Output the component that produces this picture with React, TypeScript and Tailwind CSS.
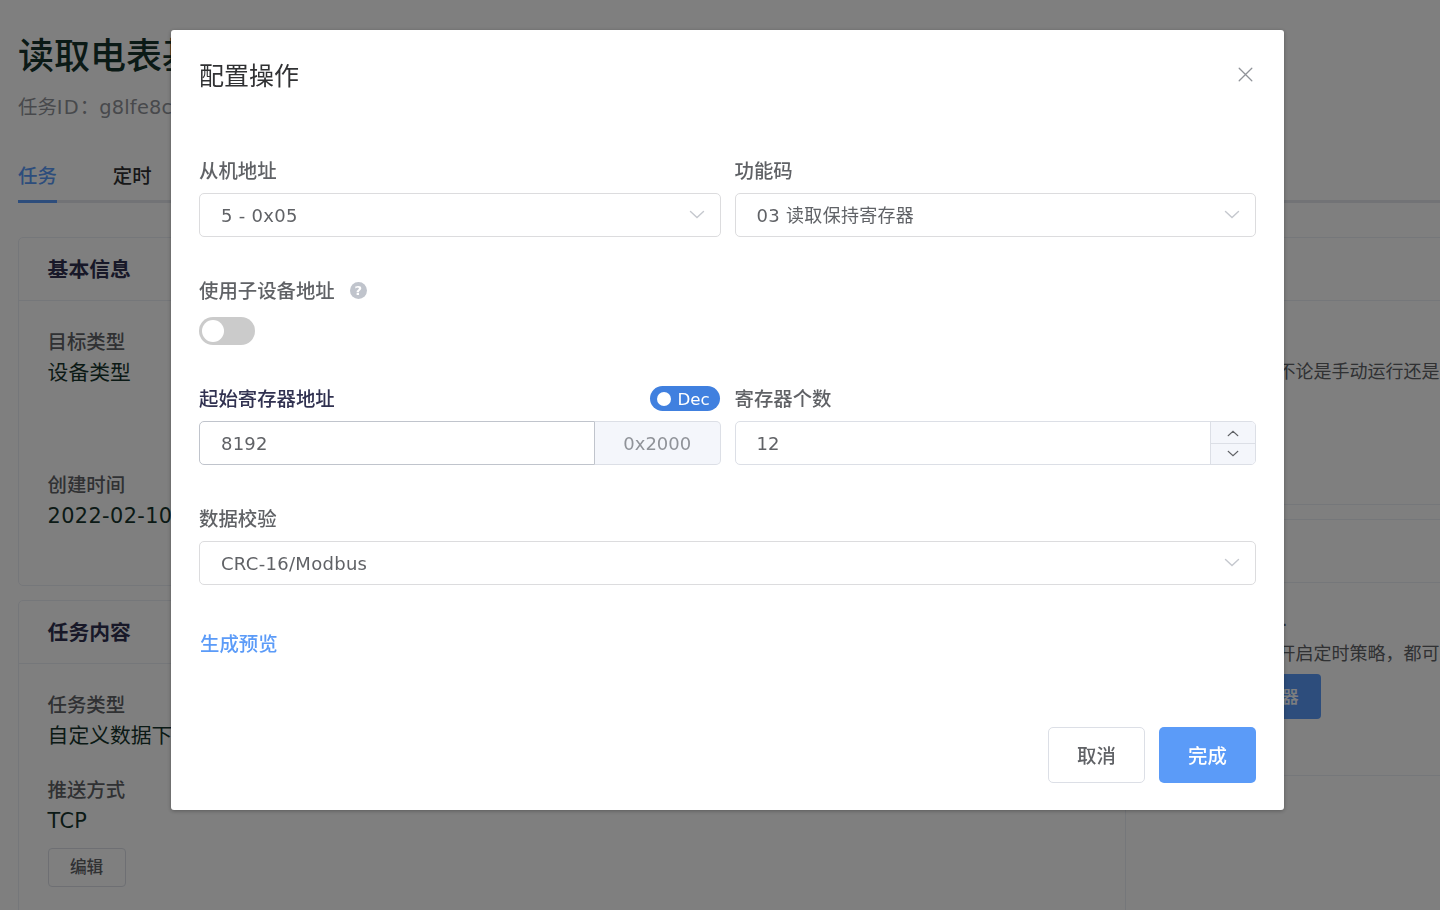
import React, { useState } from 'react'

const Chevron = ({ up, className }: { up?: boolean; className?: string }) => (
  <svg viewBox="0 0 16 9" fill="none" stroke="currentColor" strokeWidth="1.4" strokeLinecap="round" className={className}>
    <path d={up ? 'M1.5 7.5 8 1.5l6.5 6' : 'M1.5 1.5 8 7.5l6.5-6'} />
  </svg>
)

const Select = ({ value }: { value: string }) => (
  <button className="flex h-11 w-full items-center justify-between rounded-[5px] border border-[#dcdcde] bg-white pl-[21px] pr-[15px] text-left text-lg leading-none tracking-[0.3px]">
    <span className="pt-[2px]">{value}</span>
    <Chevron className="mb-px h-[9px] w-4 text-[#c5c8ce]" />
  </button>
)

const Label = ({ children, className }: { children: React.ReactNode; className?: string }) => (
  <div className={`flex h-[43px] items-center pt-px text-[19.4px] font-medium leading-none ${className || 'text-[#606266]'}`}>
    {children}
  </div>
)

const Card = ({ title, children, className }: { title: string; children: React.ReactNode; className?: string }) => (
  <div className={`rounded-[5px] border border-[#ebeef5] ${className}`}>
    <div className="flex h-[63px] items-center border-b border-[#ebeef5] pl-[28.6px] pt-1 text-[20.8px] font-bold text-[#303150]">
      {title}
    </div>
    <div className="pl-[28.6px]">{children}</div>
  </div>
)

const Info = ({ name, value, className }: { name: string; value: string; className?: string }) => (
  <div className="whitespace-nowrap">
    <div className="h-[31px] text-[19.4px] font-medium leading-[31px] text-[#606266]">{name}</div>
    <div className={`h-[31px] text-[20.8px] leading-[31px] text-[#17352d] ${className || ''}`}>{value}</div>
  </div>
)

const TaskPage = () => (
  <div className="h-full w-[1800px] pl-[18px]">
    <h1 className="pt-8 text-4xl font-medium leading-[50px] text-[#17352d]">读取电表基本数据</h1>
    <p className="mt-[13px] text-[19.4px] leading-[26px] text-[#909399]">
      任务<span className="tracking-[1.2px]">ID</span>：<span className="tracking-[0.2px]">g8lfe8c2</span>
    </p>
    <div className="mt-[29px] flex h-[53px] gap-14 border-b-[3px] border-[#e4e7ed] text-[19.4px] font-medium leading-[54px]">
      <div className="h-[53px] border-b-[3px] border-[#5b9bf8] text-[#5b9bf8]">任务</div>
      <div className="text-[#303133]">定时</div>
    </div>
    <div className="mt-[34px] flex gap-[14px]">
      <div className="flex w-[1108px] flex-col gap-[14px]">
        <Card title="基本信息" className="h-[349px]">
          <div className="flex flex-col gap-[81px] pt-[26px]">
            <Info name="目标类型" value="设备类型" />
            <Info name="创建时间" value="2022-02-10 16:20" className="tracking-[0.4px]" />
          </div>
        </Card>
        <Card title="任务内容" className="h-[420px]">
          <div className="flex flex-col gap-[23px] pt-[26px]">
            <Info name="任务类型" value="自定义数据下发" />
            <Info name="推送方式" value="TCP" className="tracking-[0.3px]" />
          </div>
          <button className="mt-[11px] h-[39px] w-[78px] rounded-[4px] border border-[#dcdfe6] text-[16.7px] font-medium text-[#606266]">
            编辑
          </button>
        </Card>
      </div>
      <div className="flex w-[520px] flex-col gap-[14px] text-lg text-[#606266]">
        <Card title="运行" className="h-[268px]">
          <p className="pt-[56px] leading-[30px]">任务创建后，不论是手动运行还是定时</p>
        </Card>
        <Card title="定时" className="h-[257px]">
          <p className="w-[118px] pt-[22px] text-right leading-[30px]">定时运行.</p>
          <p className="pt-1 leading-[30px]">无论任务是否开启定时策略，都可以</p>
          <button className="mt-[5px] h-[45px] w-[151px] rounded-[4px] bg-[#5b9bf8] pr-[22px] pt-[3px] text-right text-[16.7px] font-medium text-white">
            前往定时器
          </button>
        </Card>
      </div>
    </div>
  </div>
)

const ConfigDialog = () => {
  const [address, setAddress] = useState<string>('8192')
  const [count, setCount] = useState<number>(12)
  const hex = '0x' + Number(address).toString(16).toUpperCase()

  return (
    <div className="flex h-[780px] w-[1113px] flex-col rounded-[3px] bg-white px-7 text-[#606266] shadow-[0_1px_4px_rgba(0,0,0,0.3)]">
      <div className="flex h-[120px] items-start justify-between pt-[30px]">
        <h2 className="text-[25px] leading-[34px] text-[#303133]">配置操作</h2>
        <button className="mr-[3px] mt-[7px] text-[#909399]">
          <svg width="15" height="15" viewBox="0 0 15 15" fill="none" stroke="currentColor" strokeWidth="1.3" strokeLinecap="round">
            <path d="M1.2 1.2 13.8 13.8M13.8 1.2 1.2 13.8" />
          </svg>
        </button>
      </div>

      <div className="flex flex-col gap-[33px]">
        <div className="grid grid-cols-2 gap-[14px]">
          <div>
            <Label>从机地址</Label>
            <Select value="5 - 0x05" />
          </div>
          <div>
            <Label>功能码</Label>
            <Select value="03 读取保持寄存器" />
          </div>
        </div>

        <div>
          <Label>
            使用子设备地址
            <span className="mb-[3px] ml-[15px] flex h-[17px] w-[17px] items-center justify-center rounded-full bg-[#c0c4cc] text-[13px] font-bold text-white">
              ?
            </span>
          </Label>
          <div className="mt-1 flex h-7 w-14 items-center rounded-full bg-[#cbcbcb] pl-[3px]">
            <div className="h-[22px] w-[22px] rounded-full bg-white"></div>
          </div>
        </div>

        <div className="grid grid-cols-2 gap-[14px]">
          <div>
            <div className="flex items-center justify-between">
              <Label className="text-[#303150]">起始寄存器地址</Label>
              <div className="mb-[2px] mr-px flex h-[25px] w-[70px] items-center gap-[7px] rounded-full bg-[#4080df] pl-[7px] text-[16.7px] leading-none text-white">
                <span className="h-[14px] w-[14px] rounded-full bg-white"></span>
                <span className="pt-px">Dec</span>
              </div>
            </div>
            <div className="flex h-11">
              <input
                className="w-[396px] rounded-l-[5px] border border-[#c0c4cc] pl-[21px] pt-[2px] text-lg tracking-[0.2px] outline-none"
                value={address}
                onChange={(e) => setAddress(e.target.value)}
              />
              <div className="flex flex-1 items-center justify-center rounded-r-[5px] border border-l-0 border-[#dcdfe6] bg-[#f4f6fb] pt-[2px] text-lg text-[#909399]">
                {hex}
              </div>
            </div>
          </div>
          <div>
            <Label>寄存器个数</Label>
            <div className="flex h-11 overflow-hidden rounded-[5px] border border-[#dcdfe6]">
              <div className="flex flex-1 items-center pl-[21px] pt-[2px] text-lg">{count}</div>
              <div className="flex w-[45px] flex-col border-l border-[#dcdfe6] bg-[#f4f6fb]">
                <button
                  className="flex h-[22px] items-center justify-center border-b border-[#dcdfe6] pt-px"
                  onClick={() => setCount((prev) => prev + 1)}
                >
                  <Chevron up className="h-[7px] w-3" />
                </button>
                <button
                  className="flex flex-1 items-center justify-center pb-px"
                  onClick={() => setCount((prev) => prev - 1)}
                >
                  <Chevron className="h-[7px] w-3" />
                </button>
              </div>
            </div>
          </div>
        </div>

        <div>
          <Label>数据校验</Label>
          <Select value="CRC-16/Modbus" />
        </div>
      </div>

      <button className="ml-px mt-[33px] h-[52px] self-start pt-[2px] text-[19.4px] font-medium text-[#5b9bf8]">生成预览</button>

      <div className="mt-[57px] flex justify-end gap-[14px] text-[19.4px] font-medium">
        <button className="h-14 w-[97px] rounded-[5px] border border-[#dcdfe6] pt-[3px]">取消</button>
        <button className="h-14 w-[97px] rounded-[5px] bg-[#5b9bf8] pt-[3px] text-white">完成</button>
      </div>
    </div>
  )
}

const App = () => {
  return (
    <div className="h-[910px] w-[1440px] overflow-hidden bg-white font-['DejaVu_Sans','Noto_Sans_CJK_SC',sans-serif]">
      <TaskPage />
      <div className="fixed inset-0 flex items-start bg-black/50 pl-[171px] pt-[30px]">
        <ConfigDialog />
      </div>
    </div>
  )
}

export default App
